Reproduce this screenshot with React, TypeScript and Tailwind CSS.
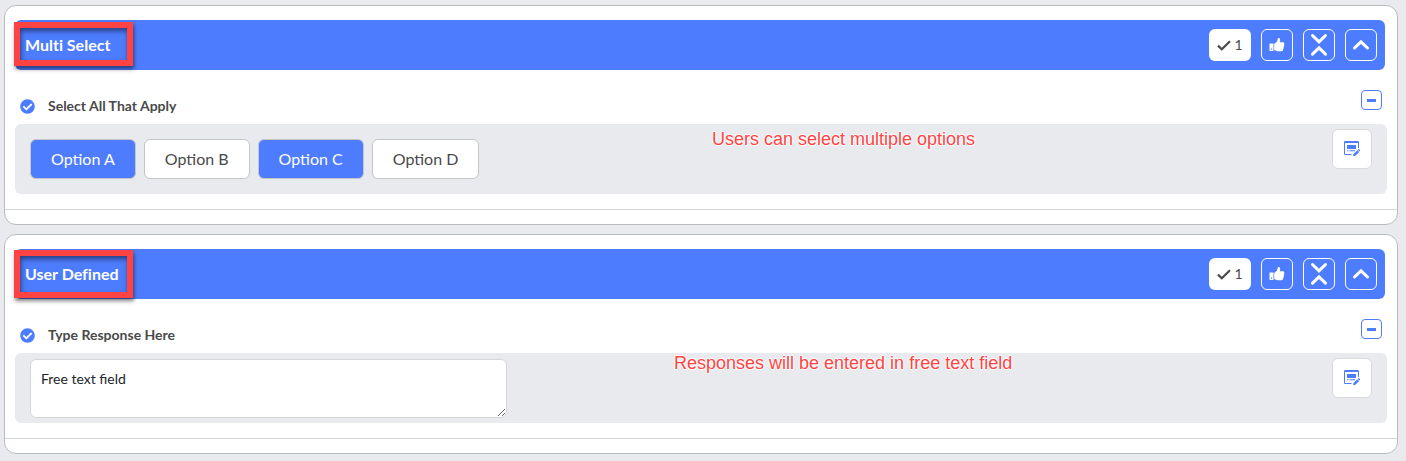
import React from 'react';
import { FaCheckCircle } from 'react-icons/fa';

const options = [
  { label: 'Option A', selected: true },
  { label: 'Option B', selected: false },
  { label: 'Option C', selected: true },
  { label: 'Option D', selected: false },
];

const headerButton =
  'flex h-8 w-8 items-center justify-center rounded-md border border-white text-white';

function CheckIcon() {
  return (
    <svg width="14" height="11" viewBox="0 0 14 11" fill="none" stroke="currentColor" strokeWidth="2.2" aria-hidden="true">
      <path d="M1 5.6 4.8 9.3 13 1.2" />
    </svg>
  );
}

function ThumbIcon() {
  return (
    <svg width="16" height="16" viewBox="0 0 16 16" fill="currentColor" aria-hidden="true">
      <path fillRule="evenodd" d="M.5 6.5h4v7.5h-4zM2 11.6v1.2h1.1v-1.2z" />
      <path d="M5.2 7 8 4.6 8.8 1.6Q9.2.8 10.1 1.1q1.2.5 1.1 2.1L10.7 5.2h3.4q1.3.2 1.3 1.4 0 .8-.5 1.2.5.6.3 1.3-.1.6-.6 1 .3.6 0 1.3-.2.5-.6.8.2.8-.2 1.4-.4.7-1.4.7H9.6q-1.4 0-2.6-.6l-1.8-.6z" />
    </svg>
  );
}

function CollapseIcon() {
  return (
    <svg width="18" height="24" viewBox="0 0 18 24" fill="none" stroke="currentColor" strokeWidth="3" strokeLinecap="round" aria-hidden="true">
      <path d="M2.5 2.5 9 8.8l6.5-6.3M2.5 21.2 9 14.9l6.5 6.3" />
    </svg>
  );
}

function ChevronUpIcon() {
  return (
    <svg width="18" height="12" viewBox="0 0 18 12" fill="none" stroke="currentColor" strokeWidth="3" strokeLinecap="round" aria-hidden="true">
      <path d="M2.5 9 9 2.8 15.5 9" />
    </svg>
  );
}

function NoteIcon() {
  return (
    <svg width="16" height="16" viewBox="0 0 16 16" fill="none" aria-hidden="true">
      <path d="M0 1.2Q0 0 1.2 0h12.6Q15 0 15 1.2V7h-1V2H1v11h6.5v1H1.2Q0 14 0 12.8Z" fill="currentColor" />
      <path d="M3 4h9v4H3zM3 9.3h1.5v1H3zM5.5 9.3H11v1H5.5z" fill="currentColor" />
      <path d="m9 15.3.5-2.4 3.8-3.7 1.9 1.9-3.8 3.7zM13.8 8.7l.6-.6q.4-.3.8.1l1 1q.3.4 0 .7l-.6.6z" fill="currentColor" />
    </svg>
  );
}

interface QuestionCardProps {
  title: string;
  question: string;
  note: string;
  markClass: string;
  noteClass: string;
  children: React.ReactNode;
}

function QuestionCard({ title, question, note, markClass, noteClass, children }: QuestionCardProps) {
  return (
    <section className="relative rounded-xl border border-[#b9bcbd] bg-white pt-3.5 pb-3.5">
      <header className="mr-3 ml-2.5 flex h-[50px] items-center justify-between rounded-md bg-[#4d7cfe] pr-2 pl-2.5">
        <h2 className="text-base font-bold text-white [font-variant-ligatures:none]">{title}</h2>
        <div className="flex gap-2.5">
          <button
            type="button"
            aria-label="Answered: 1"
            className="flex h-8 w-[42px] items-center justify-center gap-[3px] rounded-md bg-white text-sm text-[#4a4a4a]"
          >
            <CheckIcon />
            1
          </button>
          <button type="button" aria-label="Like" className={headerButton}>
            <ThumbIcon />
          </button>
          <button type="button" aria-label="Collapse all" className={headerButton}>
            <CollapseIcon />
          </button>
          <button type="button" aria-label="Collapse section" className={headerButton}>
            <ChevronUpIcon />
          </button>
        </div>
      </header>

      <div className="flex h-[54px] items-start justify-between pt-5 pr-[15px] pl-[15px]">
        <div className="flex items-center gap-[13px] pt-1.5">
          <FaCheckCircle className="h-[15px] w-[15px] text-[#4d7cfe]" />
          <h3 className="text-sm leading-5 font-bold text-[#4a4a4a] [font-variant-ligatures:none]">{question}</h3>
        </div>
        <button
          type="button"
          aria-label="Hide question"
          className="flex h-5 w-[21px] items-center justify-center rounded-sm border border-[#4d7cfe]"
        >
          <span className="h-[3px] w-[9px] bg-[#4d7cfe]" />
        </button>
      </div>

      <div className="mx-2.5 flex h-[70px] items-start justify-between rounded-md bg-[#e9eaee] pr-[15px] pl-[15px]">
        {children}
        <button
          type="button"
          aria-label="Add note"
          className="mt-[5px] flex h-10 w-10 items-center justify-center rounded-md border border-[#d9d9d9] bg-white text-[#4d7cfe]"
        >
          <NoteIcon />
        </button>
      </div>
      <div className="mt-[15px] border-t border-[#d5d7d8]" />

      <div
        className={`pointer-events-none absolute left-[9px] w-[119px] border-6 border-[#ff4343] shadow-[1px_3px_4px_rgba(0,0,0,0.5),inset_1px_3px_5px_rgba(0,0,0,0.5)] ${markClass}`}
      />
      <p
        className={`pointer-events-none absolute font-['Liberation_Sans',sans-serif] text-lg leading-5 whitespace-nowrap text-[#ff4343] [text-shadow:1px_0_1px_#fff,-1px_0_1px_#fff,0_1px_1px_#fff,0_-1px_1px_#fff] ${noteClass}`}
      >
        {note}
      </p>
    </section>
  );
}

export default function App() {
  return (
    <main className="flex min-h-screen flex-col gap-[9px] bg-[#e9eaee] pt-[5px] pr-2 pb-[7px] pl-1 font-['Lato',sans-serif]">
      <QuestionCard
        title="Multi Select"
        question="Select All That Apply"
        note="Users can select multiple options"
        markClass="top-4 h-11"
        noteClass="top-[123px] left-[707px]"
      >
        <div className="mt-[15px] flex gap-2">
          {options.map((option) => (
            <button
              key={option.label}
              type="button"
              aria-pressed={option.selected}
              className={`h-10 rounded-md border border-[#c5c6c9] px-5 text-base ${
                option.selected ? 'bg-[#4d7cfe] text-white' : 'bg-white text-[#4a4a4a]'
              }`}
            >
              {option.label}
            </button>
          ))}
        </div>
      </QuestionCard>

      <QuestionCard
        title="User Defined"
        question="Type Response Here"
        note="Responses will be entered in free text field"
        markClass="top-[15px] h-12"
        noteClass="top-[118px] left-[669px]"
      >
        <textarea
          aria-label="Type Response Here"
          defaultValue="Free text field"
          className="mt-1.5 h-[59px] w-[477px] resize rounded-md border border-[#d5d6d8] bg-white px-2.5 py-[9px] text-sm leading-5 text-[#212529]"
        />
      </QuestionCard>
    </main>
  );
}
